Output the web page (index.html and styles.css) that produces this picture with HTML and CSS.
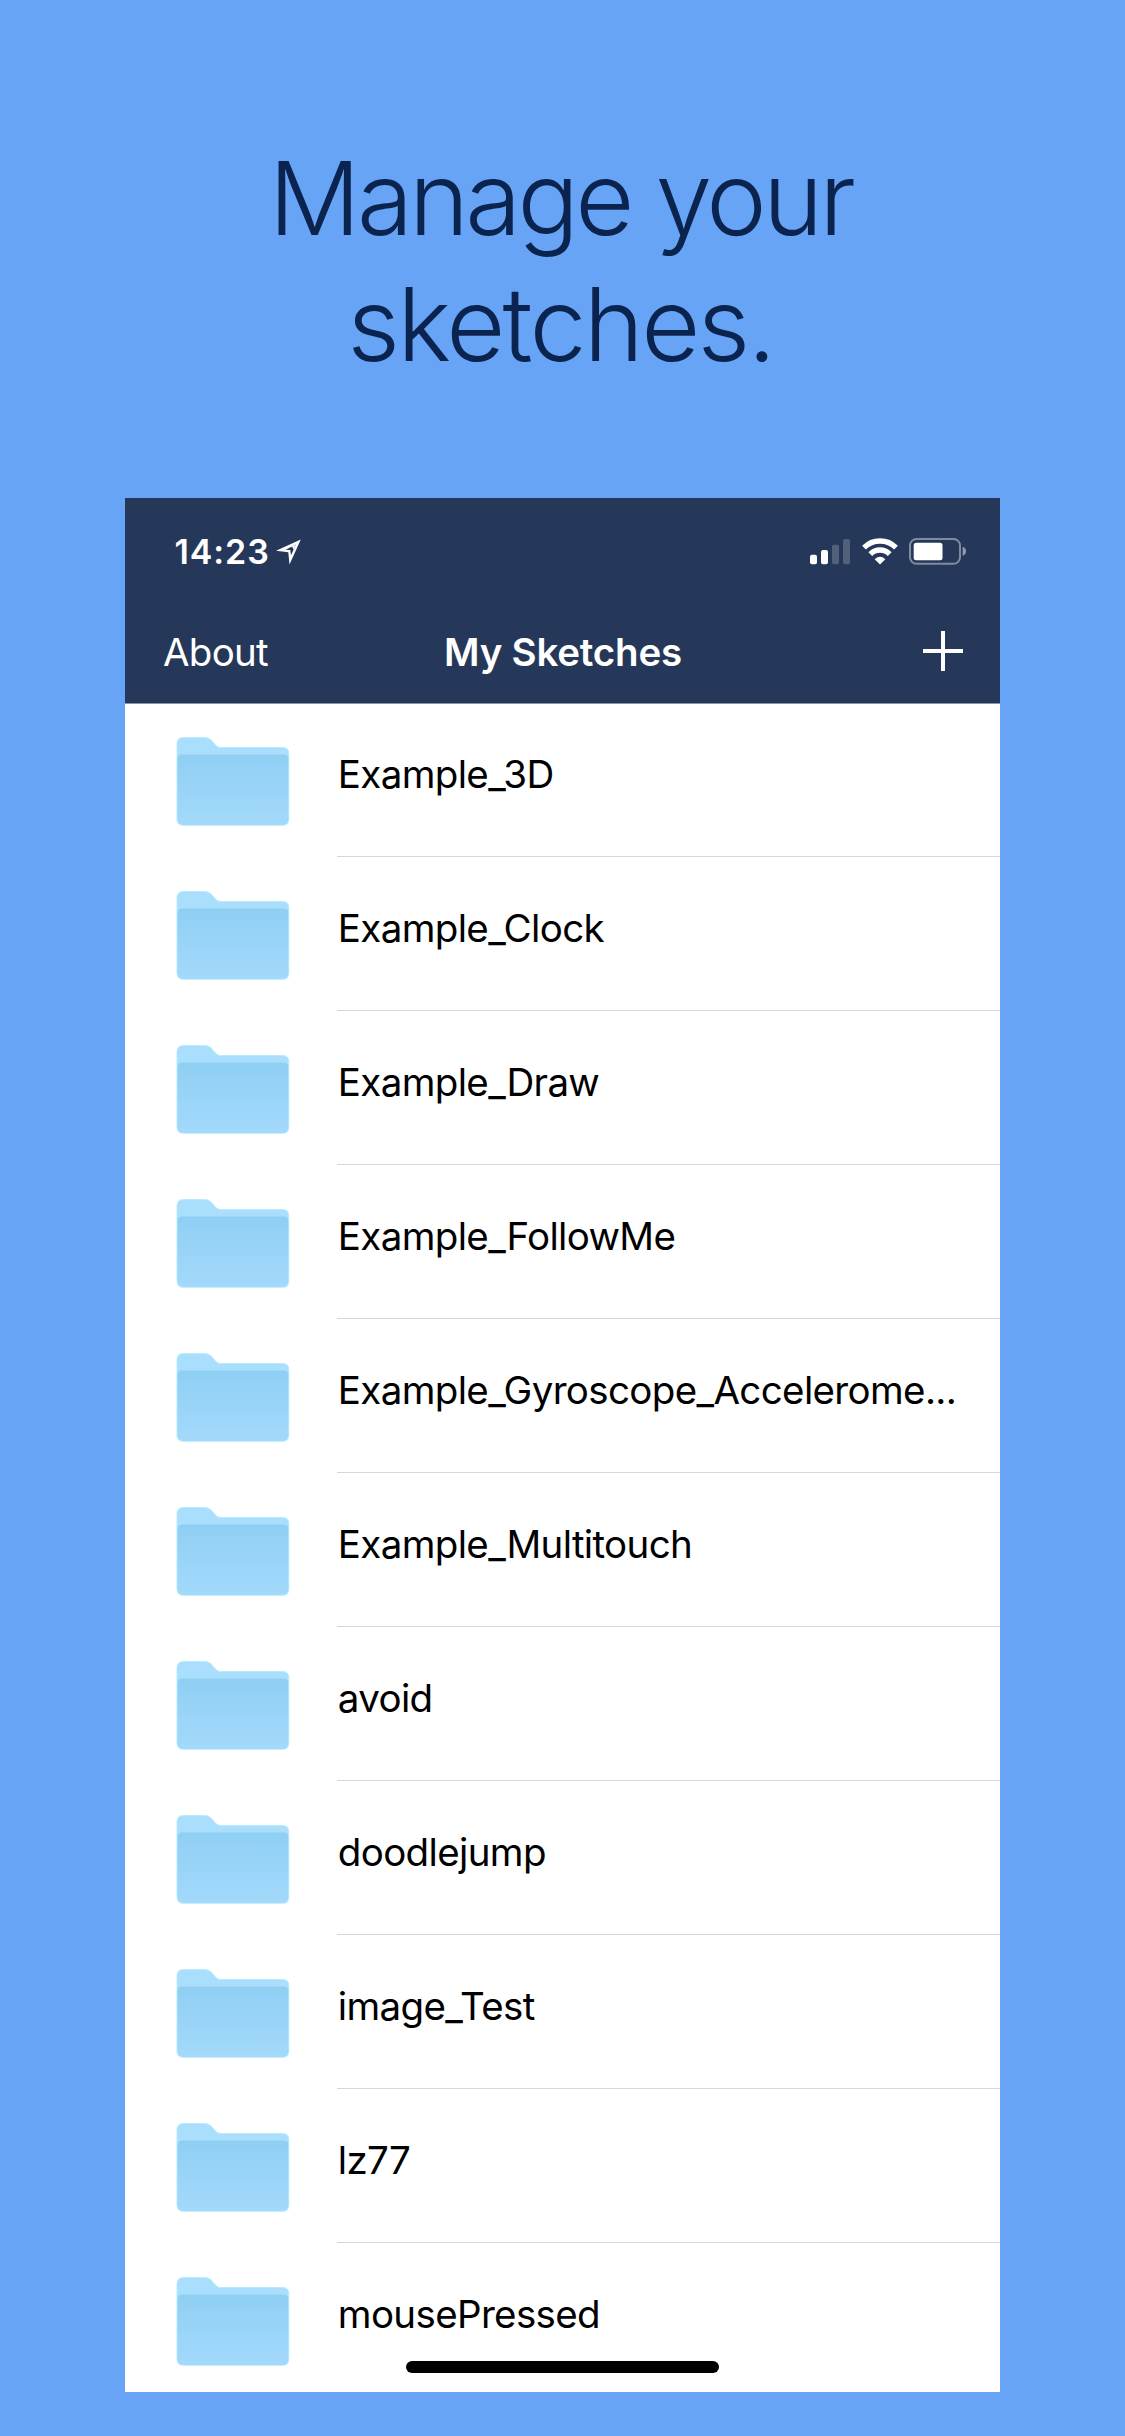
FILE: index.html
```
<!DOCTYPE html>
<html lang="en">
<head>
<meta charset="utf-8">
<title>My Sketches</title>
<link rel="stylesheet" href="styles.css">
</head>
<body>
<svg width="0" height="0" class="defs" aria-hidden="true">
  <defs>
    <linearGradient id="front" x1="0" y1="0" x2="0" y2="1">
      <stop offset="0" stop-color="#8fcff4"/>
      <stop offset="1" stop-color="#a3d9fb"/>
    </linearGradient>
    <symbol id="folder" viewBox="0 0 114 90">
      <path d="M1 7Q1 .5 7.500 .5H29C37 .5 38 10.500 44.500 10.500H106.500Q112.800 10.500 112.800 16.700V82Q112.800 88.300 106.500 88.300H7.500Q1 88.300 1 82Z" fill="#aadefd" stroke="#b9ecfd" stroke-width="1"/>
      <path d="M1.500 22Q1.500 17.500 6 17.500H107.800Q112.300 17.500 112.300 22V82Q112.300 87.700 106.500 87.700H7.500Q1.500 87.700 1.500 82Z" fill="url(#front)"/>
    </symbol>
  </defs>
</svg>
<h1 class="headline"><span class="line line-first">Manage your</span><span class="line line-second">sketches.</span></h1>
<main class="phone">
  <header class="header">
    <div class="status">
      <span class="time">14:23</span>
      <svg class="location" width="26" height="26" viewBox="0 0 26 26"><path d="M0 11.800 24.800.5 13.500 25.500 12.300 13.200Z" fill="#fff"/><path d="M9.500 10.800 20 5.600 15 16.200 14.300 11Z" fill="#263859"/><path d="M15 8.100 20 5.600 17.600 10.700 16.800 8.500Z" fill="#fff"/></svg>
      <svg class="signal" width="40" height="26" viewBox="0 0 40 26" fill="#fff"><rect y="15.700" width="7" height="9.600" rx="2"/><rect x="11" y="11" width="7" height="14.300" rx="2"/><g opacity=".2"><rect x="22" y="5.700" width="7" height="19.600" rx="2"/><rect x="33" y="0" width="7" height="25.300" rx="2"/></g></svg>
      <svg class="wifi" width="36" height="27" viewBox="0 0 36 27" fill="none" stroke="#fff" stroke-width="5.400"><path d="M2 9.700A22.500 22.500 0 0 1 34 9.700"/><path d="M8.300 16.100A13.700 13.700 0 0 1 27.700 16.100"/><path d="M12.700 21.200Q18 16.500 23.300 21.200L18 26.500Z" fill="#fff" stroke="none"/></svg>
      <svg class="battery" width="58" height="27" viewBox="0 0 58 27"><rect x="1" y="1" width="50" height="24.800" rx="6.500" fill="none" stroke="#fff" stroke-opacity=".42" stroke-width="2"/><rect x="4.700" y="4.700" width="28.800" height="17.600" rx="2.500" fill="#fff"/><path d="M53.700 8.800Q57 10 57 13.300T53.700 17.900Z" fill="#fff" fill-opacity=".5"/></svg>
    </div>
    <nav class="nav">
      <span class="about">About</span>
      <span class="title">My Sketches</span>
      <svg class="plus" width="40" height="40" viewBox="0 0 40 40"><path d="M18 0h4v18h18v4H22v18h-4V22H0v-4h18Z" fill="#fff"/></svg>
    </nav>
  </header>
  <ul class="list">
    <li class="row"><svg class="folder"><use href="#folder"/></svg><span class="name">Example_3D</span></li>
    <li class="row"><svg class="folder"><use href="#folder"/></svg><span class="name">Example_Clock</span></li>
    <li class="row"><svg class="folder"><use href="#folder"/></svg><span class="name">Example_Draw</span></li>
    <li class="row"><svg class="folder"><use href="#folder"/></svg><span class="name">Example_FollowMe</span></li>
    <li class="row"><svg class="folder"><use href="#folder"/></svg><span class="name">Example_Gyroscope_Accelerome...</span></li>
    <li class="row"><svg class="folder"><use href="#folder"/></svg><span class="name">Example_Multitouch</span></li>
    <li class="row"><svg class="folder"><use href="#folder"/></svg><span class="name">avoid</span></li>
    <li class="row"><svg class="folder"><use href="#folder"/></svg><span class="name">doodlejump</span></li>
    <li class="row"><svg class="folder"><use href="#folder"/></svg><span class="name">image_Test</span></li>
    <li class="row"><svg class="folder"><use href="#folder"/></svg><span class="name">lz77</span></li>
    <li class="row"><svg class="folder"><use href="#folder"/></svg><span class="name">mousePressed</span></li>
  </ul>
  <div class="home-indicator"></div>
</main>
</body>
</html>
```
FILE: styles.css
```
* { box-sizing: border-box; }

body {
  margin: 0;
  height: 2436px;
  padding-top: 135px;
  overflow: hidden;
  background: #68a4f5;
  font-family: Inter, "Liberation Sans", sans-serif;
}

.defs { position: absolute; }

.headline {
  margin: 0 0 111px;
  font-size: 102px;
  font-weight: 330;
  line-height: 126px;
  text-align: center;
  color: #0b244f;
}

.line { display: block; }
.line-first { letter-spacing: -3.8px; text-indent: -4px; }
.line-second { letter-spacing: -2.7px; text-indent: -4px; }

.phone {
  position: relative;
  width: 875px;
  height: 1894px;
  margin: 0 auto;
  overflow: hidden;
  background: #fff;
}

.header {
  position: relative;
  height: 205px;
  padding-top: 32px;
  background: #263859;
  color: #fff;
  box-shadow: 0 1px #8c95a5;
}

.status {
  display: flex;
  align-items: flex-start;
  height: 46px;
  padding: 8px 33px 0 49.5px;
}

.time {
  width: 102px;
  margin-top: -7px;
  font-size: 34px;
  font-weight: 600;
  line-height: 42px;
  letter-spacing: .9px;
}

.location { margin: 1px 0 0 -1px; }
.signal { margin: 1px 0 0 auto; }
.wifi { margin-left: 12px; }
.battery { margin-left: 11px; }

.nav {
  display: grid;
  grid-template-columns: 1fr auto 1fr;
  align-items: center;
  height: 84px;
  margin-top: 33px;
  padding: 0 37px 0 38px;
  font-size: 38.5px;
  line-height: 48px;
}

.about,
.title { padding-top: 2px; }
.about { letter-spacing: -.75px; }
.title { font-weight: 600; letter-spacing: -.2px; }
.plus { justify-self: end; }

.list {
  margin: 0;
  padding: 0;
  list-style: none;
}

.row {
  display: flex;
  height: 154px;
  padding-left: 51px;
}

.folder {
  flex: none;
  width: 114px;
  height: 90px;
  margin-top: 34px;
}

.name {
  flex: 1;
  margin-left: 47px;
  padding-top: 47px;
  border-bottom: 1px solid #d6d6d9;
  font-size: 38.5px;
  line-height: 48px;
  letter-spacing: -.64px;
  text-indent: .8px;
  white-space: nowrap;
  color: #000;
}

.row:last-child .name { border-bottom: 0; }

.home-indicator {
  position: absolute;
  bottom: 19px;
  left: 281px;
  width: 313px;
  height: 12px;
  border-radius: 6px;
  background: #000;
}
```
